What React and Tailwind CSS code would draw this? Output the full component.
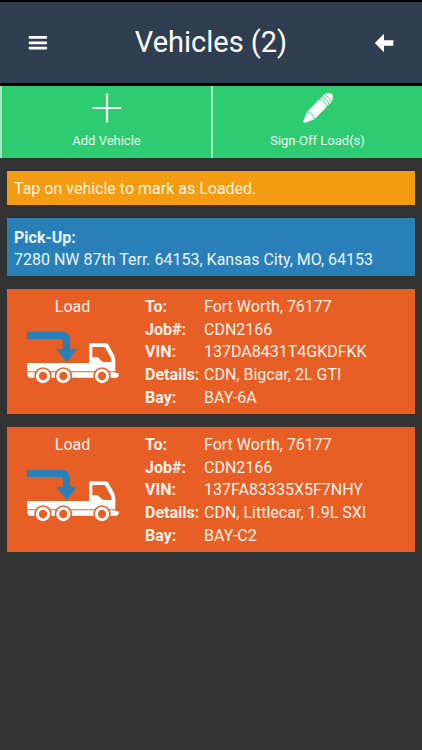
import React from 'react'

const pickUp = '7280 NW 87th Terr. 64153, Kansas City, MO, 64153'

const vehicles = [
  {
    id: 1,
    to: 'Fort Worth, 76177',
    job: 'CDN2166',
    vin: '137DA8431T4GKDFKK',
    details: 'CDN, Bigcar, 2L GTI',
    bay: 'BAY-6A',
  },
  {
    id: 2,
    to: 'Fort Worth, 76177',
    job: 'CDN2166',
    vin: '137FA83335X5F7NHY',
    details: 'CDN, Littlecar, 1.9L SXI',
    bay: 'BAY-C2',
  },
]

function MenuIcon() {
  return (
    <svg width="20" height="16" viewBox="0 0 20 16" fill="white" aria-hidden="true">
      <rect x="0.7" y="1" width="18.4" height="2.8" rx="1" />
      <rect x="0.7" y="6.4" width="18.4" height="2.8" rx="1" />
      <rect x="0.7" y="11.8" width="18.4" height="2.8" rx="1" />
    </svg>
  )
}

function BackIcon() {
  return (
    <svg width="20" height="20" viewBox="0 0 20 20" fill="white" aria-hidden="true">
      <path d="M0.8 10 10 0.8V7.2H19.4V12.8H10V19.2Z" />
    </svg>
  )
}

function PlusIcon() {
  return (
    <svg width="30" height="30" viewBox="0 0 30 30" fill="#f2fff6" aria-hidden="true">
      <path d="M13.9 0.6H16.1V13.9H29.4V16.1H16.1V29.4H13.9V16.1H0.6V13.9H13.9Z" />
    </svg>
  )
}

function CrayonIcon() {
  return (
    <svg width="30" height="30" viewBox="0 0 90 90" aria-hidden="true">
      <path d="M1 88Q0 86 2 82L12 57 60 8Q66 1 72 1H82Q89 1 89 8V19Q89 25 82 31L34 79 7 89Q2 90 1 88Z" fill="white" />
      <g fill="none" stroke="#2ecc71" strokeWidth="2.6">
        <path d="M11 56Q31 58 35 80" />
        <path d="M47 18Q68 23 73 43" />
        <path d="M54 11Q74 17 79 36" />
        <path d="M61 4Q81 10 86 30" />
      </g>
    </svg>
  )
}

function Wheel({ cx }) {
  return (
    <>
      <circle cx={cx} cy="153" r="26" fill="#e75f25" />
      <circle cx={cx} cy="153" r="17" fill="none" stroke="white" strokeWidth="9" />
    </>
  )
}

function TruckIcon() {
  return (
    <svg width="105" height="65" viewBox="0 0 315 195" aria-hidden="true">
      <path d="M21 20H127Q150 22 150 46V71H171L140 112L108 71H129V48Q128 42 122 42H21Z" fill="#2980b9" />
      <path
        fill="white"
        fillRule="evenodd"
        d="M21 114H207V55H257Q264 55 267 62L282 90Q286 97 286 106V139H21ZM217 66V97H231Q235 97 238 101L245 108Q248 111 253 111H274V101L256 68Q255 66 251 66Z"
      />
      <path d="M21 142H286V143Q297 143 297 148Q297 157 289 158H27Q21 154 21 142Z" fill="white" />
      <Wheel cx={69} />
      <Wheel cx={130} />
      <Wheel cx={246} />
    </svg>
  )
}

function ActionButton({ icon, label }) {
  return (
    <button
      type="button"
      className="h-[72px] flex flex-col items-center justify-center gap-2 border-l-2 border-[#a3e8c0] bg-[#2ecc71] text-[13px] leading-5 text-[#e6fbee] cursor-pointer"
    >
      {icon}
      {label}
    </button>
  )
}

function VehicleCard({ vehicle }) {
  const rows = [
    ['To:', vehicle.to],
    ['Job#:', vehicle.job],
    ['VIN:', vehicle.vin],
    ['Details:', vehicle.details],
    ['Bay:', vehicle.bay],
  ]

  return (
    <button
      type="button"
      className="w-full min-h-[125px] flex items-stretch bg-[#e75f25] pt-[7px] pb-[5px] text-left text-[#fff1ea] cursor-pointer"
    >
      <span className="w-[138px] shrink-0 flex flex-col items-start">
        <span className="w-[131px] text-center leading-[22px]">Load</span>
        <span className="pl-[13px] pt-[7px]">
          <TruckIcon />
        </span>
      </span>
      <span className="flex-1 grid grid-rows-5 self-stretch">
        {rows.map(([label, value]) => (
          <span key={label} className="flex items-center leading-[22px]">
            <strong className="w-[59px] shrink-0 font-bold">{label}</strong>
            <span>{value}</span>
          </span>
        ))}
      </span>
    </button>
  )
}

export default function App() {
  return (
    <div className="min-h-screen bg-[#333333] font-['Roboto',sans-serif] text-[16px] text-white">
      <header className="h-[86px] flex items-center justify-between border-t-2 border-b-3 border-black bg-[#2f3e50] px-7">
        <button type="button" aria-label="Menu" className="cursor-pointer">
          <MenuIcon />
        </button>
        <h1 className="pb-[2px] text-[29px] leading-9">Vehicles ({vehicles.length})</h1>
        <button type="button" aria-label="Back" className="cursor-pointer">
          <BackIcon />
        </button>
      </header>

      <div className="grid grid-cols-2">
        <ActionButton icon={<PlusIcon />} label="Add Vehicle" />
        <ActionButton icon={<CrayonIcon />} label="Sign-Off Load(s)" />
      </div>

      <main className="flex flex-col gap-[13px] px-[7px] py-[13px]">
        <p className="bg-[#f39c12] px-[7px] pt-[7px] pb-[5px] leading-[22px] text-[#fff3dc]">
          Tap on vehicle to mark as Loaded.
        </p>
        <div className="bg-[#2980b9] px-[7px] pt-[9px] pb-[5px] leading-[22px] text-[#e8f4fc]">
          <p className="font-bold">Pick-Up:</p>
          <p>{pickUp}</p>
        </div>
        {vehicles.map((vehicle) => (
          <VehicleCard key={vehicle.id} vehicle={vehicle} />
        ))}
      </main>
    </div>
  )
}
